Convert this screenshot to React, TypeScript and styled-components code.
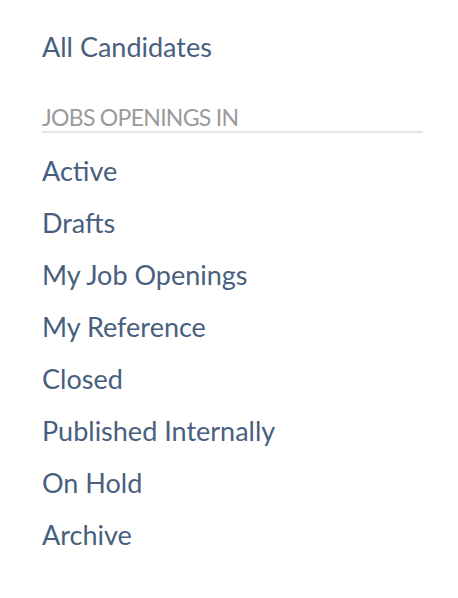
import React from "react";
import styled, { createGlobalStyle } from "styled-components";

const Global = createGlobalStyle`
  html, body { margin: 0; padding: 0; background: #fff; }
  body { font-family: "Lato", "Noto Sans", sans-serif; }
`;

const Nav = styled.nav`
  display: flex;
  flex-direction: column;
  padding: 27px 35px 0 42px;
`;

const TopLink = styled.a`
  display: block;
  font-size: 27px;
  line-height: 40px;
  color: #48607e;
  text-decoration: none;
`;

const SectionTitle = styled.div`
  margin-top: 36px;
  font-size: 23px;
  line-height: 28px;
  letter-spacing: -0.7px;
  color: #9a9a9a;
  border-bottom: 2px solid #e4e4e4;
`;

const List = styled.ul`
  list-style: none;
  margin: 18px 0 0;
  padding: 0;
  display: flex;
  flex-direction: column;
  gap: 12px;
`;

const Item = styled.li`
  font-size: 27px;
  line-height: 40px;
  color: #48607e;
`;

const items = [
  "Active",
  "Drafts",
  "My Job Openings",
  "My Reference",
  "Closed",
  "Published Internally",
  "On Hold",
  "Archive",
];

export default function App() {
  return (
    <>
      <Global />
      <Nav>
        <TopLink>All Candidates</TopLink>
        <SectionTitle>JOBS OPENINGS IN</SectionTitle>
        <List>
          {items.map((t) => (
            <Item key={t}>{t}</Item>
          ))}
        </List>
      </Nav>
    </>
  );
}
